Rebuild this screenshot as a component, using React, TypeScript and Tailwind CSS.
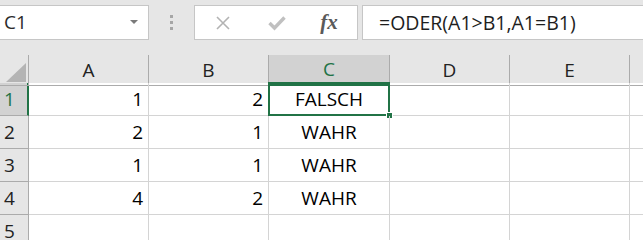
const COLS = ["A", "B", "C", "D", "E"];
const ROWS: [string, string, string][] = [
  ["1", "2", "FALSCH"],
  ["2", "1", "WAHR"],
  ["1", "1", "WAHR"],
  ["4", "2", "WAHR"],
  ["", "", ""],
];

const GRID = "grid grid-cols-[29px_120px_120px_121px_120px_120px_1fr]";

function Dropdown() {
  return (
    <svg width="8" height="5" viewBox="0 0 8 5" className="mr-[10px]">
      <path d="M0 0 L8 0 L4 4 Z" fill="#7a7a7a" />
    </svg>
  );
}

function CancelIcon() {
  return (
    <svg width="16" height="16" viewBox="0 0 16 16">
      <path d="M2 2 L14 14 M14 2 L2 14" stroke="#b3b3b3" strokeWidth="1.6" />
    </svg>
  );
}

function CheckIcon() {
  return (
    <svg width="18" height="16" viewBox="0 0 18 16">
      <path d="M1.5 8 L6.5 13 L16.5 2.5" stroke="#c0c0c0" strokeWidth="3.4" fill="none" />
    </svg>
  );
}

export default function App() {
  return (
    <div className="w-[643px] h-[240px] overflow-hidden bg-white font-['Open_Sans',sans-serif] text-[#000]">
      {/* formula bar */}
      <div className="flex h-[55px] bg-[#e6e6e6] pt-[5px] items-start">
        <div className="flex items-center justify-between w-[149px] h-[35px] bg-white border border-l-0 border-[#c6c6c6] pl-[4px]">
          <span className="text-[19px] text-[#2b2b2b] leading-none">C1</span>
          <Dropdown />
        </div>
        <div className="w-[45px] h-[35px] flex flex-col items-center justify-center gap-[3px]">
          <span className="w-[3px] h-[3px] bg-[#a6a6a6]" />
          <span className="w-[3px] h-[3px] bg-[#a6a6a6]" />
          <span className="w-[3px] h-[3px] bg-[#a6a6a6]" />
        </div>
        <div className="flex items-center w-[164px] h-[35px] bg-white border border-[#c6c6c6]">
          <div className="w-[56px] flex justify-center">
            <CancelIcon />
          </div>
          <div className="w-[52px] flex justify-center">
            <CheckIcon />
          </div>
          <div className="w-[52px] flex justify-center">
            <span className="font-['Liberation_Serif',serif] italic font-bold text-[21px] text-[#5a5a5a] leading-none">
              fx
            </span>
          </div>
        </div>
        <div className="ml-[4px] flex-1 flex items-center h-[35px] bg-white border border-r-0 border-[#c6c6c6] pl-[16px]">
          <span className="text-[19.5px] text-[#1e1e1e] leading-none">=ODER(A1&gt;B1,A1=B1)</span>
        </div>
      </div>

      {/* column headers */}
      <div className={`${GRID} h-[28px] bg-[#e6e6e6]`}>
        <div className="relative border-r border-b border-[#ababab]">
          <svg width="20" height="19" viewBox="0 0 20 19" className="absolute left-[6px] bottom-[3px]">
            <path d="M20 0 L20 19 L0 19 Z" fill="#b4b4b4" />
          </svg>
        </div>
        {COLS.map((c) => (
          <div
            key={c}
            className={
              c === "C"
                ? "flex items-center justify-center bg-[#d2d2d2] border-r border-[#ababab] border-b-2 border-b-[#217346] text-[#217346] text-[19px]"
                : "flex items-center justify-center border-r border-b border-[#ababab] text-[19px] text-[#222]"
            }
          >
            {c}
          </div>
        ))}
        <div className="border-b border-[#ababab]" />
      </div>

      {/* rows */}
      {ROWS.map((r, i) => (
        <div key={i} className={`${GRID} h-[33px]`}>
          <div
            className={
              i === 0
                ? "flex items-center pl-[4px] bg-[#d2d2d2] border-r-2 border-r-[#217346] border-b border-[#ababab] text-[19px] text-[#217346]"
                : "flex items-center pl-[4px] bg-[#e6e6e6] border-r border-b border-[#ababab] text-[19px] text-[#222]"
            }
          >
            {i + 1}
          </div>
          <div className="flex items-center justify-end pr-[5px] border-r border-b border-[#d4d4d4] text-[19px]">
            {r[0]}
          </div>
          <div className="flex items-center justify-end pr-[5px] border-r border-b border-[#d4d4d4] text-[19px]">
            {r[1]}
          </div>
          <div className="relative flex items-center justify-center border-r border-b border-[#d4d4d4] text-[19px]">
            {r[2]}
            {i === 0 && (
              <>
                <div className="absolute -left-px -top-px -right-px -bottom-px border-2 border-[#217346]" />
                <div className="absolute -right-[4px] -bottom-[4px] w-[7px] h-[7px] bg-[#217346] border border-white" />
              </>
            )}
          </div>
          <div className="border-r border-b border-[#d4d4d4]" />
          <div className="border-r border-b border-[#d4d4d4]" />
          <div className="border-b border-[#d4d4d4]" />
        </div>
      ))}
    </div>
  );
}
